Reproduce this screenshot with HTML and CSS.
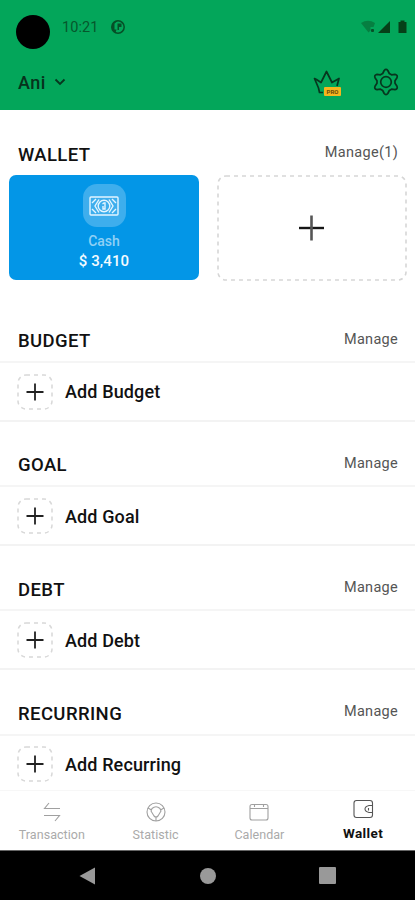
FILE: index.html
```html
<!DOCTYPE html>
<html lang="en">
<head>
<meta charset="utf-8">
<title>Wallet</title>
<link rel="stylesheet" href="styles.css">
</head>
<body>
<div class="app">
  <header class="header">
    <div class="status">
      <span class="camera"></span>
      <span class="time">10:21</span>
      <svg class="status-app" width="16" height="16" viewBox="0 0 16 16"><circle cx="8" cy="8" r="6.200" fill="none" stroke="#064f27" stroke-width="1.500"/><path d="M8 1.800A6.200 6.200 0 0 0 5.500 13.700L6.500 10.500H4.500V4.500Z" fill="#064f27"/><path d="M7.500 4.500H11.500V8H9V11H7.500Z" fill="#064f27"/></svg>
      <svg class="status-icons" width="48" height="16" viewBox="0 0 48 16"><path d="M1 4Q8 -.5 15 4L13.500 8H10.500V11.500L8.500 13.500Z" fill="#067f41"/><rect x="11" y="10" width="3" height="3" rx="1" fill="#064f27"/><path d="M18 14L30 2V14Z" fill="#064018"/><path d="M38.500 3H40.500V1.500H44.500V3H46.500V14H38.500Z" fill="#064018"/></svg>
    </div>
    <div class="toolbar">
      <span class="account">Ani</span>
      <svg class="chevron" width="12" height="8" viewBox="0 0 12 8"><path d="M1.500 1.500L6 6L10.500 1.500" fill="none" stroke="#07361e" stroke-width="1.800"/></svg>
      <div class="crown">
        <svg width="28" height="25" viewBox="0 0 28 25"><path d="M10 22.500H6.500L5.500 18L1.500 8.500L3.500 9.500L8 12.500L13.500 1.500L19 12.500L26 8.500L24 16" fill="none" stroke="#07361e" stroke-width="1.700" stroke-linejoin="round"/></svg>
        <span class="pro">PRO</span>
      </div>
      <svg class="gear" width="28" height="28" viewBox="0 0 28 28"><path d="M12.200 2.500Q14 .2 15.800 2.500L17.300 5.500L19.500 6.800L23 6.300Q26 7 25 9.800L23 12.700V15.300L25 18.200Q26 21 23 21.700L19.500 21.200L17.300 22.500L15.800 25.500Q14 27.800 12.200 25.500L10.700 22.500L8.500 21.200L5 21.700Q2 21 3 18.200L5 15.300V12.700L3 9.800Q2 7 5 6.300L8.500 6.800L10.700 5.500Z" fill="none" stroke="#07361e" stroke-width="1.700" stroke-linejoin="round"/><circle cx="14" cy="14" r="5.300" fill="none" stroke="#07361e" stroke-width="1.700"/></svg>
    </div>
  </header>

  <main class="content">
    <section class="wallets">
      <div class="heading"><h2 class="title">WALLET</h2><span class="manage">Manage(1)</span></div>
      <div class="cards">
        <div class="card">
          <span class="card-icon"><svg width="30" height="20" viewBox="0 0 30 20" fill="none" stroke="#e4f5ff" stroke-width="1.400"><rect x="1" y="1" width="28" height="18" rx="1"/><path d="M3 7L7 3M23 3L27 7M27 13L23 17M7 17L3 13M10 3.500L6 10L10 16.500M20 3.500L24 10L20 16.500"/><circle cx="15" cy="10" r="5.800"/><path d="M13.500 8L15 7H16V13H14V10"/></svg></span>
          <span class="card-name">Cash</span>
          <span class="card-sum">$ 3,410</span>
        </div>
        <div class="card-add">
          <svg width="190" height="106" viewBox="0 0 190 106"><rect x="1" y="1" width="188" height="104" rx="8" fill="none" stroke="#d6d6d6" stroke-width="1.600" stroke-dasharray="4 4"/><path d="M82 53H107" stroke="#161616" stroke-width="2.400"/><path d="M94.500 40.500V65.500" stroke="#555" stroke-width="2.600"/></svg>
        </div>
      </div>
    </section>

    <section class="group">
      <div class="heading"><h2 class="title">BUDGET</h2><span class="manage">Manage</span></div>
      <div class="row"><svg class="add" width="36" height="36" viewBox="0 0 36 36"><rect class="dash" x="1" y="1" width="34" height="34" rx="8"/><path class="plus" d="M9.500 18H26.500M18 9.500V26.500"/></svg><span class="label">Add Budget</span></div>
    </section>
    <section class="group">
      <div class="heading"><h2 class="title">GOAL</h2><span class="manage">Manage</span></div>
      <div class="row"><svg class="add" width="36" height="36" viewBox="0 0 36 36"><rect class="dash" x="1" y="1" width="34" height="34" rx="8"/><path class="plus" d="M9.500 18H26.500M18 9.500V26.500"/></svg><span class="label">Add Goal</span></div>
    </section>
    <section class="group">
      <div class="heading"><h2 class="title">DEBT</h2><span class="manage">Manage</span></div>
      <div class="row"><svg class="add" width="36" height="36" viewBox="0 0 36 36"><rect class="dash" x="1" y="1" width="34" height="34" rx="8"/><path class="plus" d="M9.500 18H26.500M18 9.500V26.500"/></svg><span class="label">Add Debt</span></div>
    </section>
    <section class="group">
      <div class="heading"><h2 class="title">RECURRING</h2><span class="manage">Manage</span></div>
      <div class="row"><svg class="add" width="36" height="36" viewBox="0 0 36 36"><rect class="dash" x="1" y="1" width="34" height="34" rx="8"/><path class="plus" d="M9.500 18H26.500M18 9.500V26.500"/></svg><span class="label">Add Recurring</span></div>
    </section>
  </main>

  <nav class="tabs">
    <div class="tab"><svg width="20" height="20" viewBox="0 0 20 20"><path d="M18 6.500H2.500L7 1M2 13.500H17.500L13 19"/></svg><span>Transaction</span></div>
    <div class="tab"><svg width="20" height="20" viewBox="0 0 20 20"><circle cx="10" cy="10" r="9"/><path d="M6 6.500Q10 3 14 6.500L15 9L12 14Q10 16 8 14L5 9ZM2 6L5.500 8M18 6L14.500 8M10 15.500V19"/></svg><span>Statistic</span></div>
    <div class="tab"><svg width="20" height="20" viewBox="0 0 20 20"><rect x="1" y="2.500" width="18" height="15.500" rx="2"/><path d="M1 6.500H19M5.500 2.500V5M14.500 2.500V5"/></svg><span>Calendar</span></div>
    <div class="tab active"><svg width="22" height="20" viewBox="0 0 22 20"><rect x="2" y="1.500" width="18.500" height="17" rx="2.500"/><path d="M20.500 6.500H17Q13 7.500 13 10T17 13.500H20.500M16.500 9V11.500"/></svg><span>Wallet</span></div>
  </nav>
  <div class="system">
    <svg width="18" height="20" viewBox="0 0 18 20"><path d="M.5 10L16 1.500V18.500Z" fill="#999"/></svg>
    <span class="home"></span>
    <span class="recent"></span>
  </div>
</div>
</body>
</html>
```
FILE: styles.css
```css
* { box-sizing: border-box; }
body { margin: 0; background: #fff; font-family: Roboto, "Liberation Sans", sans-serif; color: #111; }
svg { display: block; flex: none; }
.app { width: 415px; height: 900px; display: flex; flex-direction: column; overflow: hidden; }

.header { height: 110px; flex: none; background: #03a65a; display: flex; flex-direction: column; }
.status { height: 54px; padding: 0 7px 0 16px; display: flex; align-items: center; }
.camera { width: 34px; height: 34px; margin-top: 10px; border-radius: 50%; background: #000; }
.time { margin-left: 12px; font-size: 14.500px; color: #06572c; letter-spacing: .1px; }
.status-app { margin-left: 11px; }
.status-icons { margin-left: auto; }
.toolbar { height: 56px; padding: 0 15px 0 18px; display: flex; align-items: center; }
.account { font-size: 18px; font-weight: 500; color: #07321c; letter-spacing: .5px; }
.chevron { margin-left: 8px; }
.crown { margin-left: auto; position: relative; }
.pro { position: absolute; left: 11px; top: 17px; width: 17px; height: 9px; border-radius: 1px; background: #f6b51e; color: #6b4b08; font-size: 6px; font-weight: 700; line-height: 9px; text-align: center; }
.gear { margin-left: 31px; }

.content { flex: 1; min-height: 0; overflow: hidden; }
.wallets { height: 187.500px; }
.heading { display: flex; justify-content: space-between; align-items: center; padding: 0 17px 0 18px; }
.wallets .heading { height: 65px; padding-top: 24px; }
.title { margin: 0; font-size: 18.500px; line-height: 22px; font-weight: 500; letter-spacing: .4px; }
.manage { margin-top: -3px; font-size: 14.500px; line-height: 20px; color: #555; letter-spacing: .3px; }
.cards { display: flex; justify-content: space-between; padding: 0 8px 0 9px; }
.card { width: 190px; height: 105px; border-radius: 7px; background: #0396e7; display: flex; flex-direction: column; align-items: center; padding-top: 9px; }
.card-icon { width: 43px; height: 43px; border-radius: 14px; background: #3eaeed; display: grid; place-items: center; }
.card-name { margin-top: 5px; font-size: 14px; line-height: 18px; font-weight: 500; color: #8fd0f5; }
.card-sum { margin-top: 2px; font-size: 15px; line-height: 18px; font-weight: 500; color: #f4fbff; letter-spacing: .1px; }

.group { height: 124.200px; display: flex; flex-direction: column; border-bottom: 2px solid #f3f3f3; }
.group .heading { height: 65.500px; padding-top: 24px; border-bottom: 2px solid #f5f5f5; }
.row { flex: 1; display: flex; align-items: center; padding: 1px 17px 0; }
.dash { fill: none; stroke: #d8d8d8; stroke-width: 1.500; stroke-dasharray: 4 4; }
.plus { fill: none; stroke: #222; stroke-width: 1.800; }
.label { margin-left: 12px; font-size: 18px; font-weight: 500; letter-spacing: .12px; }

.tabs { height: 60px; flex: none; border-top: 1px solid #f7f7f7; background: #fff; display: grid; grid-template-columns: repeat(4, 1fr); }
.tab { display: flex; flex-direction: column; align-items: center; padding-top: 11px; gap: 4px; font-size: 12.500px; line-height: 17px; color: #aaa; letter-spacing: .05px; }
.tab svg { fill: none; stroke: #a0a0a0; stroke-width: 1.100; }
.tab.active { padding-top: 8px; gap: 6px; color: #111; font-size: 13.500px; font-weight: 700; letter-spacing: .4px; }
.tab.active svg { stroke: #555; }

.system { height: 50px; flex: none; background: #000; border-top: 1px solid #666; display: flex; align-items: center; padding: 0 79px 0 79px; justify-content: space-between; }
.home { width: 16px; height: 16px; border-radius: 50%; background: #999; }
.recent { width: 17px; height: 17px; border-radius: 1px; background: #999; }
```
